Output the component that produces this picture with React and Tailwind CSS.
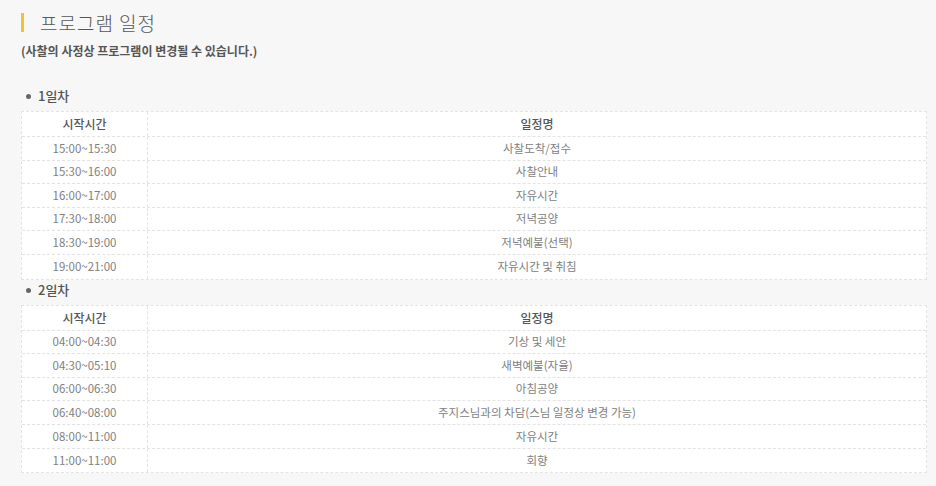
import React from 'react';

const days = [
  {
    label: '1일차',
    rows: [
      ['15:00~15:30', '사찰도착/접수'],
      ['15:30~16:00', '사찰안내'],
      ['16:00~17:00', '자유시간'],
      ['17:30~18:00', '저녁공양'],
      ['18:30~19:00', '저녁예불(선택)'],
      ['19:00~21:00', '자유시간 및 취침'],
    ],
  },
  {
    label: '2일차',
    rows: [
      ['04:00~04:30', '기상 및 세안'],
      ['04:30~05:10', '새벽예불(자율)'],
      ['06:00~06:30', '아침공양'],
      ['06:40~08:00', '주지스님과의 차담(스님 일정상 변경 가능)'],
      ['08:00~11:00', '자유시간'],
      ['11:00~11:00', '회향'],
    ],
  },
];

const font = { fontFamily: '"Noto Sans CJK KR", "Noto Sans", sans-serif' };

const ScheduleTable = ({ rows }) => (
  <div className="bg-white border border-dashed border-[#e3e3e3]">
    {/* 헤더 */}
    <div className="flex h-[25px] border-b border-dashed border-[#e3e3e3] text-[12px] font-medium text-[#555]">
      <div className="w-[126px] flex items-center justify-center border-r border-dashed border-[#e3e3e3]">시작시간</div>
      <div className="flex-1 flex items-center justify-center">일정명</div>
    </div>
    {rows.map((r, i) => (
      <div
        key={i}
        className={`flex h-[23.6px] text-[11.5px] text-[#808080] ${i < rows.length - 1 ? 'border-b border-dashed border-[#e3e3e3]' : ''}`}
      >
        <div className="w-[126px] flex items-center justify-center border-r border-dashed border-[#e3e3e3]">{r[0]}</div>
        <div className="flex-1 flex items-center justify-center">{r[1]}</div>
      </div>
    ))}
  </div>
);

export default function App() {
  return (
    <div className="min-h-screen w-[936px] bg-[#f7f7f7] pl-[21px] pr-[9px]" style={font}>
      {/* 타이틀 */}
      <div className="pt-[12px] flex items-center h-[32px]">
        <div className="w-[3px] h-[19px] bg-[#f2c230]" />
        <h2 className="ml-[16px] text-[19px] font-light text-[#555] leading-none tracking-[1px]">프로그램 일정</h2>
      </div>
      <p className="mt-[10px] text-[12px] font-semibold text-[#555] leading-[18px]">(사찰의 사정상 프로그램이 변경될 수 있습니다.)</p>

      <div className="mt-[26px]">
        {days.map((d, i) => (
          <div key={i}>
            <div className="h-[25px] flex items-start pt-[1px] pl-[5px] text-[13px] font-medium text-[#555] leading-[18px]">
              <span className="w-[5px] h-[5px] rounded-full bg-[#666] mr-[7px] mt-[7px]" />
              {d.label}
            </div>
            <ScheduleTable rows={d.rows} />
          </div>
        ))}
      </div>
    </div>
  );
}
